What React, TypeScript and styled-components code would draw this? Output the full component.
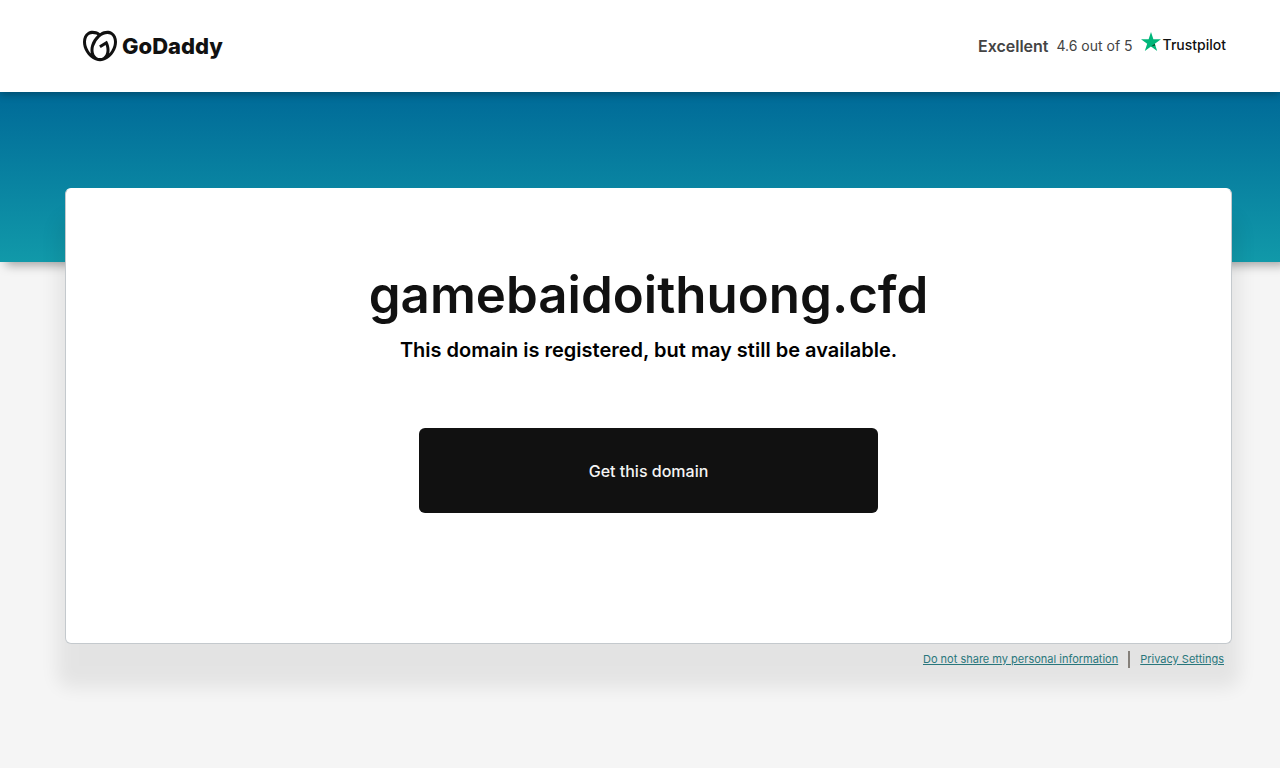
import React from "react";
import styled, { createGlobalStyle } from "styled-components";
import { SiGodaddy } from "react-icons/si";

const GlobalStyle = createGlobalStyle`
  *, *::before, *::after { box-sizing: border-box; }
  body {
    margin: 0;
    background: #f5f5f5;
    color: #111;
    font-family: Inter, "Liberation Sans", sans-serif;
  }
`;

const Page = styled.div`
  min-height: 100vh;
`;

const Header = styled.header`
  position: relative;
  display: flex;
  align-items: center;
  justify-content: space-between;
  min-height: 92px;
  padding: 0 54px 0 83px;
  background: #fff;
  box-shadow: 0 2px 8px rgba(0, 0, 0, 0.3);
`;

const Brand = styled.a`
  display: flex;
  align-items: center;
  gap: 5px;
  color: #111;
  font-size: 22px;
  font-weight: 800;
  line-height: 32px;
  text-decoration: none;
`;

const Rating = styled.div`
  display: flex;
  align-items: center;
  gap: 8px;
  color: #444;
  font-size: 14px;
  line-height: 20px;
`;

const Verdict = styled.strong`
  font-size: 16px;
  font-weight: 600;
`;

const Trustpilot = styled.a`
  display: flex;
  align-items: flex-start;
  gap: 2px;
  padding-bottom: 2px;
  color: #111;
  font-weight: 500;
  text-decoration: none;

  svg {
    margin-top: -3px;
  }
`;

const Band = styled.div`
  height: 170px;
  background: linear-gradient(#006a98, #1199a9);
  box-shadow: 6px 3px 10px rgba(0, 0, 0, 0.35);
`;

const Main = styled.main`
  position: relative;
  margin-top: -74px;
  padding: 0 48px 32px 65px;
`;

const Card = styled.section`
  display: flex;
  flex-direction: column;
  align-items: center;
  min-height: 456px;
  padding: 72px 24px;
  border: 1px solid #c4c9cd;
  border-top-color: #fff;
  border-radius: 6px;
  background: #fff;
  box-shadow: 0 36px 18px 8px rgba(0, 0, 0, 0.07);
  text-align: center;
`;

const Domain = styled.h1`
  margin: 0;
  font-size: 51px;
  font-weight: 600;
  line-height: 67px;
`;

const Notice = styled.h2`
  margin: 7px 0 63px;
  color: #000;
  font-size: 20px;
  font-weight: 600;
  line-height: 30px;
`;

const PrimaryButton = styled.button`
  width: 100%;
  max-width: 459px;
  min-height: 85px;
  border: 0;
  border-radius: 6px;
  background: #111;
  color: #f4f4f4;
  font-family: inherit;
  font-size: 16px;
  font-weight: 500;
  cursor: pointer;
`;

const Footer = styled.footer`
  display: flex;
  align-items: center;
  justify-content: flex-end;
  gap: 10px;
  padding: 6px 8px;
`;

const FooterLink = styled.a`
  color: #29777c;
  font-size: 11px;
  line-height: 18px;
`;

const Divider = styled.span`
  width: 2px;
  height: 17px;
  background: #85807a;
`;

export default function App() {
  return (
    <Page>
      <GlobalStyle />
      <Header>
        <Brand href="#">
          <SiGodaddy size={34} aria-hidden />
          GoDaddy
        </Brand>
        <Rating>
          <Verdict>Excellent</Verdict>
          <span>4.6 out of 5</span>
          <Trustpilot href="#">
            <svg width="20" height="20" viewBox="0 0 20 20" aria-hidden>
              <path fill="#00b67a" d="M10 0l2.4 7.3H20l-6.2 4.5 2.4 7.3L10 14.6l-6.2 4.5 2.4-7.3L0 7.3h7.6z" />
              <path fill="#005128" d="M14.3 13.4l-.5-1.6L10 14.6z" />
            </svg>
            Trustpilot
          </Trustpilot>
        </Rating>
      </Header>
      <Band />
      <Main>
        <Card>
          <Domain>gamebaidoithuong.cfd</Domain>
          <Notice>This domain is registered, but may still be available.</Notice>
          <PrimaryButton type="button">Get this domain</PrimaryButton>
        </Card>
        <Footer>
          <FooterLink href="#">Do not share my personal information</FooterLink>
          <Divider />
          <FooterLink href="#">Privacy Settings</FooterLink>
        </Footer>
      </Main>
    </Page>
  );
}
